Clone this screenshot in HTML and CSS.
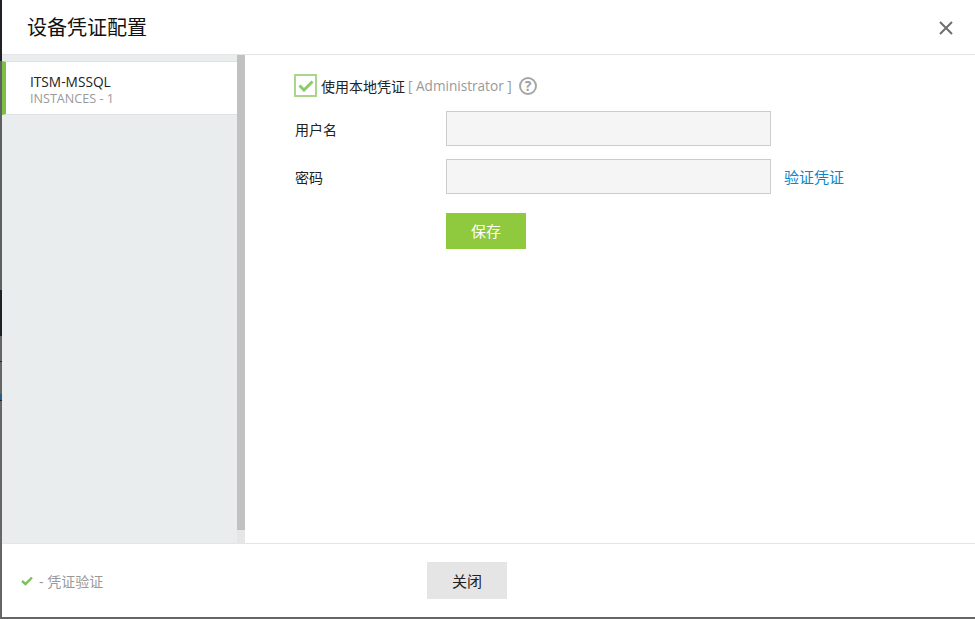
FILE: index.html
```html
<!DOCTYPE html>
<html lang="zh">
<head>
<meta charset="utf-8">
<title>设备凭证配置</title>
<link rel="stylesheet" href="styles.css">
</head>
<body>
<div class="dialog">
  <header class="head">
    <h1 class="title">设备凭证配置</h1>
    <svg class="close" width="14" height="14" viewBox="0 0 14 14"><path d="M1 1L13 13M13 1L1 13" stroke="#6f6f6f" stroke-width="2" fill="none"/></svg>
  </header>
  <div class="main">
    <aside class="side">
      <div class="list">
        <div class="item">
          <div class="item-name">ITSM-MSSQL</div>
          <div class="item-sub">INSTANCES - 1</div>
        </div>
      </div>
      <div class="scroll"><div class="thumb"></div></div>
    </aside>
    <section class="content">
      <div class="local">
        <span class="check"><svg width="16" height="13" viewBox="0 0 16 13"><path d="M1.5 6.5L6 11L14.5 2.5" stroke="#8ccb6a" stroke-width="3" fill="none"/></svg></span>
        <span class="local-label">使用本地凭证</span>
        <span class="local-user">[ Administrator ]</span>
        <svg class="help" width="18" height="18" viewBox="0 0 18 18"><circle cx="9" cy="9" r="8" fill="none" stroke="#a6a6a6" stroke-width="2"/><text x="9" y="14" text-anchor="middle" class="help-q">?</text></svg>
      </div>
      <div class="row">
        <label class="label">用户名</label>
        <div class="input"></div>
      </div>
      <div class="row">
        <label class="label">密码</label>
        <div class="input"></div>
        <a class="verify">验证凭证</a>
      </div>
      <div class="actions"><button class="save">保存</button></div>
    </section>
  </div>
  <footer class="foot">
    <div class="status">
      <svg width="12" height="10" viewBox="0 0 12 10"><path d="M1 5L4.5 8L11 1.5" stroke="#7cc05a" stroke-width="2.4" fill="none"/></svg>
      <span class="status-text">- 凭证验证</span>
    </div>
    <button class="close-btn">关闭</button>
  </footer>
</div>
</body>
</html>
```
FILE: styles.css
```css
* { box-sizing: border-box; }
html, body { margin: 0; height: 100%; }
body {
  width: 975px;
  height: 619px;
  overflow: hidden;
  background: linear-gradient(to bottom,
    #1e2226 0 61px, #5f6060 61px 290px, #1a2226 290px 336px,
    #666 336px 361px, #222 361px 362px, #666 362px 394px,
    #2f5a86 394px 400px, #222 400px 401px, #666 401px);
  font-family: "Open Sans", "Noto Sans CJK SC", sans-serif;
  padding: 0 0 2px 2px;
}
.dialog { width: 973px; height: 617px; background: #fff; display: flex; flex-direction: column; }
.head { height: 55px; flex: none; border-bottom: 1px solid #e5e5e5; display: flex; align-items: center; justify-content: space-between; padding: 2px 22px 0 25px; }
.title { margin: 0; font-size: 20px; font-weight: 400; color: #111; line-height: 1; }
.main { flex: none; height: 488px; display: flex; }
.side { width: 243px; display: flex; flex: none; }
.list { width: 235px; background: #e9eded; padding-top: 6px; }
.item { height: 54px; background: #fff; border-left: 4px solid #7cbf45; border-top: 1px solid #dfe2e2; border-bottom: 1px solid #dfe2e2; padding: 11px 0 0 24px; }
.item-name { font-size: 13.7px; line-height: 17px; margin-bottom: 1px; color: #222; }
.item-sub { font-size: 12.6px; line-height: 16px; color: #999; }
.scroll { width: 8px; background: #e6e6e6; }
.thumb { height: 475px; background: #c1c1c1; }
.content { flex: 1; padding: 18px 0 0 50px; }
.local { display: flex; align-items: center; height: 25px; margin-left: -1px; font-size: 14px; margin-bottom: 13px; }
.check { width: 23px; height: 23px; border: 2px solid #a9d68c; display: flex; align-items: center; justify-content: center; margin-right: 4px; }
.local-label { color: #222; }
.local-user { color: #999; margin-left: 3px; font-size: 13.6px; }
.help { margin-left: 7px; }
.help-q { font-size: 14px; font-weight: 700; fill: #a0a0a0; font-family: "Open Sans", sans-serif; }
.row { display: flex; align-items: center; height: 35px; margin-bottom: 13px; }
.label { width: 151px; font-size: 14px; color: #222; flex: none; }
.input { width: 325px; height: 35px; background: #f5f5f5; border: 1px solid #ccc; }
.verify { margin-left: 13px; font-size: 15px; color: #0a86c8; }
.actions { padding: 6px 0 0 151px; }
.save { width: 80px; height: 36px; border: 0; padding: 0 0 2px; background: #8fc93e; color: #fff; font: inherit; font-size: 15px; display: block; }
.foot { flex: 1; border-top: 1px solid #e5e5e5; display: flex; align-items: center; padding-left: 19px; }
.status { width: 406px; display: flex; align-items: center; gap: 6px; font-size: 14px; color: #999; }
.close-btn { width: 80px; height: 37px; border: 0; background: #e5e5e5; color: #222; font: inherit; font-size: 15px; }
```
